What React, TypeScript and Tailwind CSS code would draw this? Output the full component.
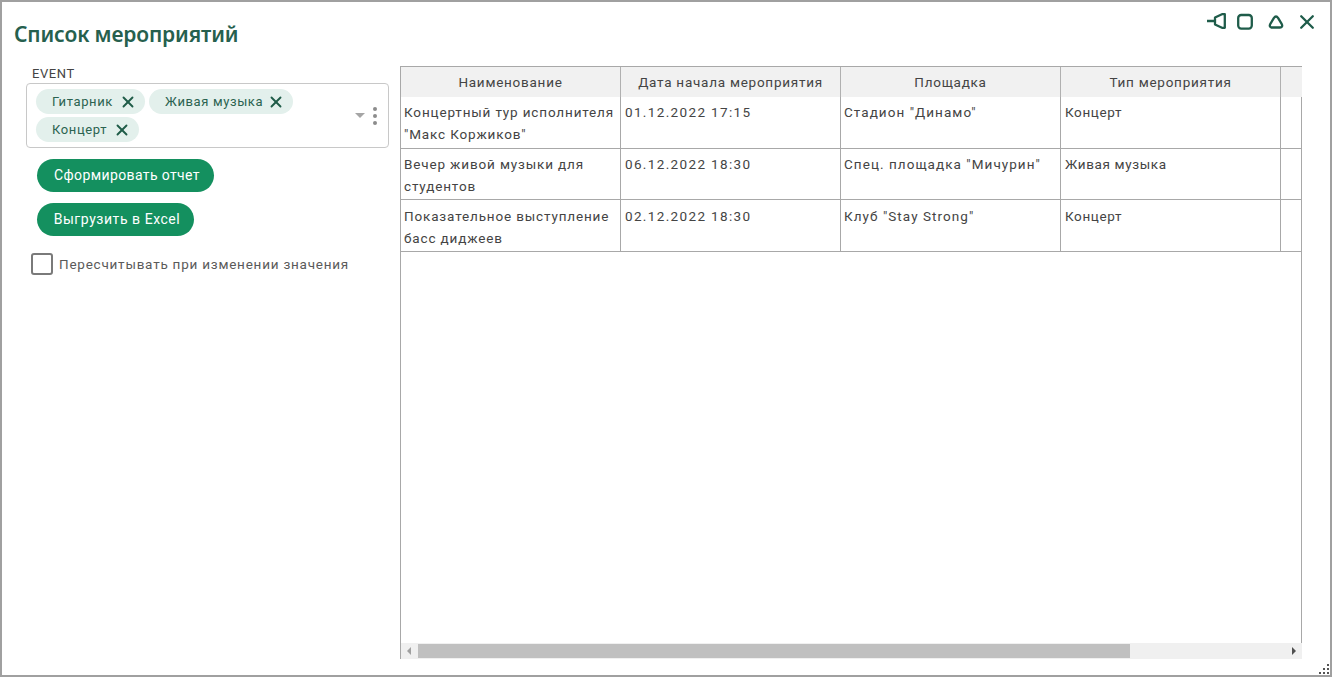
import { X } from "lucide-react";

const columns = ["Наименование", "Дата начала мероприятия", "Площадка", "Тип мероприятия"];

const rows = [
  {
    name: ["Концертный тур исполнителя", "\"Макс Коржиков\""],
    date: "01.12.2022 17:15",
    place: "Стадион \"Динамо\"",
    type: "Концерт",
    height: "h-[52px]",
    pad: "pt-[4px]",
  },
  {
    name: ["Вечер живой музыки для", "студентов"],
    date: "06.12.2022 18:30",
    place: "Спец. площадка \"Мичурин\"",
    type: "Живая музыка",
    height: "h-[51px]",
    pad: "pt-[4px]",
  },
  {
    name: ["Показательное выступление", "басс диджеев"],
    date: "02.12.2022 18:30",
    place: "Клуб \"Stay Strong\"",
    type: "Концерт",
    height: "h-[52px]",
    pad: "pt-[5px]",
  },
];

function Chip({ label, width }: { label: string; width: string }) {
  return (
    <span className={`flex h-[25px] items-center justify-between rounded-full bg-[#e3f0ec] pl-[16px] pr-[8px] text-[13px] tracking-[0.62px] text-[#2b6350] ${width}`}>
      {label}
      <X size={18} strokeWidth={2.5} className="shrink-0 text-[#1f5c48]" />
    </span>
  );
}

function WindowIcons() {
  return (
    <div className="absolute right-[15px] top-[11px] flex items-center text-[#1f5c4a]">
      <svg width="19" height="18" viewBox="0 0 19 18" fill="none" stroke="currentColor" strokeWidth="2.3" strokeLinejoin="round">
        <path d="M0 8h8M8 4.500l7-3.300h2.800v13.600H15l-7-3.300z" />
      </svg>
      <svg className="ml-[11px]" width="16" height="18" viewBox="0 0 16 18" fill="none" stroke="currentColor" strokeWidth="2.3">
        <rect x="1.200" y="2" width="13.600" height="13.600" rx="3" />
      </svg>
      <svg className="ml-[15px]" width="16" height="18" viewBox="0 0 16 18" fill="none" stroke="currentColor" strokeWidth="2.3" strokeLinejoin="round">
        <path d="M8 3.500c1 0 1.600.8 2.200 1.700l3.600 6c.9 1.600.2 3.300-1.800 3.300H4c-2 0-2.700-1.700-1.800-3.300l3.600-6C6.400 4.300 7 3.500 8 3.500z" />
      </svg>
      <svg className="ml-[15px]" width="16" height="18" viewBox="0 0 16 18" fill="none" stroke="currentColor" strokeWidth="2.3" strokeLinecap="round">
        <path d="M2.200 3.200l11.600 11.600M13.800 3.200L2.200 14.800" />
      </svg>
    </div>
  );
}

export default function App() {
  return (
    <div className="relative h-[677px] w-[1332px] overflow-hidden border-2 border-[#a0a0a0] bg-white font-['Roboto',sans-serif] text-[#444]">
      <WindowIcons />
      <h1 className="ml-[12px] mt-[18px] font-['Noto_Sans',sans-serif] text-[21px] font-semibold leading-[28px] tracking-[-0.15px] text-[#26604e]">
        Список мероприятий
      </h1>

      <div className="mt-[18px] flex items-start">
        <div className="ml-[24px] w-[363px]">
          <div className="ml-[6px] text-[13px] leading-[16px] tracking-[0.6px]">EVENT</div>
          <div className="mt-[1px] flex h-[65px] w-[363px] items-center rounded border border-[#c8c8c8] pl-[9px] pr-[8px]">
            <div className="flex w-[310px] flex-wrap gap-x-[4px] gap-y-[3px]">
              <Chip label="Гитарник" width="w-[109px]" />
              <Chip label="Живая музыка" width="w-[144px]" />
              <Chip label="Концерт" width="w-[103px]" />
            </div>
            <span className="ml-[9px] h-0 w-0 border-x-[5px] border-t-[5px] border-x-transparent border-t-[#a5a5a5]" />
            <span className="ml-[8px] flex flex-col gap-[3px]">
              <span className="h-[4px] w-[4px] rounded-full bg-[#8c8c8c]" />
              <span className="h-[4px] w-[4px] rounded-full bg-[#8c8c8c]" />
              <span className="h-[4px] w-[4px] rounded-full bg-[#8c8c8c]" />
            </span>
          </div>
          <div className="ml-[11px] mt-[11px] flex flex-col items-start gap-[11px]">
            <button className="h-[33px] w-[177px] rounded-full bg-[#14905f] pl-[3px] text-center text-[14px] tracking-[0.38px] text-white">
              Сформировать отчет
            </button>
            <button className="h-[33px] w-[157px] rounded-full bg-[#14905f] pl-[3px] text-center text-[14px] tracking-[0.55px] text-white">
              Выгрузить в Excel
            </button>
          </div>
          <label className="ml-[5px] mt-[17px] flex items-center gap-[6px] text-[13.5px] tracking-[0.77px] text-[#5a5a5a]">
            <span className="h-[22px] w-[22px] rounded-[3px] border-2 border-[#7a7a7a]" />
            Пересчитывать при изменении значения
          </label>
        </div>

        <div className="ml-[11px] flex h-[593px] w-[902px] flex-col border-l border-[#a8a8a8]">
          <div className="flex h-[577px] flex-col">
            <div className="flex h-[31px] shrink-0 border-t border-[#a8a8a8] bg-[#f1f1f1]">
              {columns.map((c) => (
                <div key={c} className="flex w-[220px] shrink-0 items-center justify-center border-r border-[#b0b0b0] text-[13.5px] tracking-[0.75px]">
                  {c}
                </div>
              ))}
            </div>
            <div className="flex flex-1 flex-col border-r border-[#a8a8a8]">
              {rows.map((r) => (
                <div key={r.date} className={`flex shrink-0 border-b border-[#a8a8a8] text-[13.5px] leading-[22px] ${r.height}`}>
                  <div className={`w-[220px] border-r border-[#a8a8a8] pl-[3px] tracking-[0.85px] ${r.pad}`}>
                    {r.name[0]}
                    <br />
                    {r.name[1]}
                  </div>
                  <div className={`w-[220px] border-r border-[#a8a8a8] pl-[4px] tracking-[1.35px] ${r.pad}`}>{r.date}</div>
                  <div className={`w-[220px] border-r border-[#a8a8a8] pl-[3px] tracking-[1.05px] ${r.pad}`}>{r.place}</div>
                  <div className={`w-[220px] border-r border-[#a8a8a8] pl-[4px] tracking-[0.62px] ${r.pad}`}>{r.type}</div>
                </div>
              ))}
            </div>
          </div>
          <div className="flex h-[16px] items-center bg-[#f0f0f0]">
            <span className="ml-[6px] h-0 w-0 border-y-[4px] border-r-[4px] border-y-transparent border-r-[#a0a0a0]" />
            <span className="ml-[7px] h-[14px] w-[712px] bg-[#c0c0c0]" />
            <span className="ml-auto mr-[6px] h-0 w-0 border-y-[4px] border-l-[4px] border-y-transparent border-l-[#505050]" />
          </div>
        </div>
      </div>

      <svg className="absolute bottom-0 right-0" width="12" height="12" viewBox="0 0 12 12" fill="#555">
        <rect x="9" y="1" width="2" height="2" />
        <rect x="5" y="5" width="2" height="2" />
        <rect x="9" y="5" width="2" height="2" />
        <rect x="1" y="9" width="2" height="2" />
        <rect x="5" y="9" width="2" height="2" />
        <rect x="9" y="9" width="2" height="2" />
      </svg>
    </div>
  );
}
